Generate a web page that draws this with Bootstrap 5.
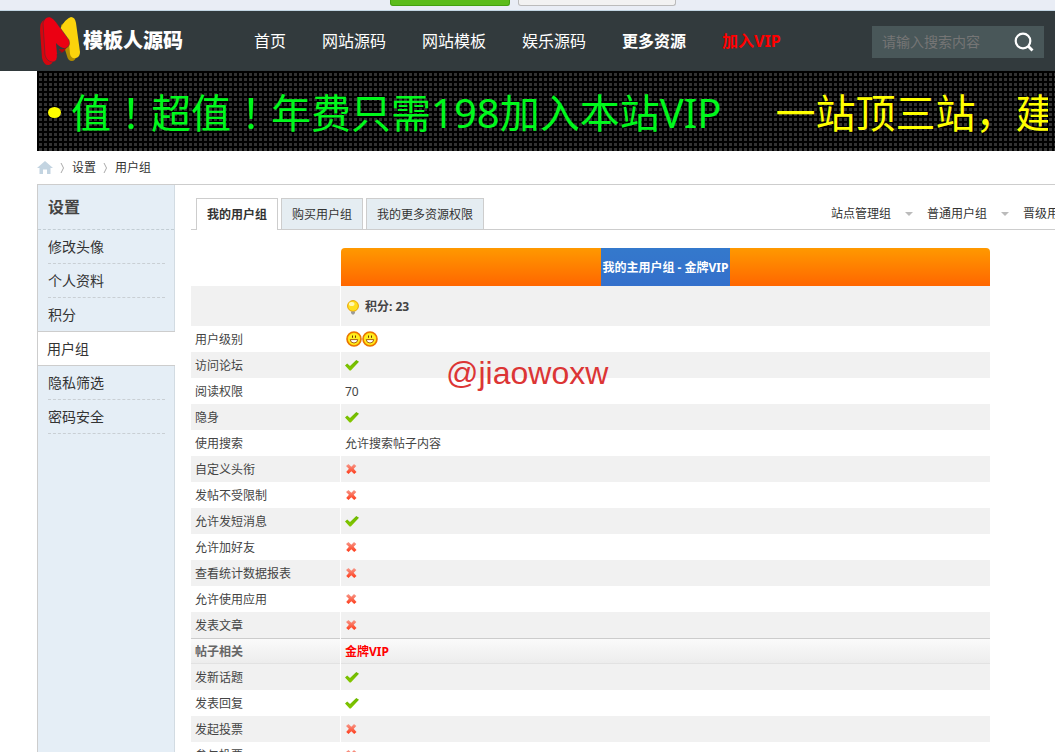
<!DOCTYPE html>
<html lang="zh-CN">
<head>
<meta charset="utf-8">
<meta name="viewport" content="width=device-width, initial-scale=1">
<title>用户组</title>
<link href="https://cdn.jsdelivr.net/npm/bootstrap@5.3.0/dist/css/bootstrap.min.css" rel="stylesheet">
<style>
body{font-family:"Noto Sans","Noto Sans CJK SC",sans-serif;font-size:12px;line-height:18px;color:#444;background:#fff}
a{color:#333;text-decoration:none}
.page-gutter{margin-left:37px}
.topstrip{height:11px;background:#e9edf5;border-bottom:1px solid #c2d5e3;padding-left:390px;gap:8px}
.topstrip button{height:6px;padding:0;border-radius:0 0 3px 3px;border:1px solid #bbb;border-top:0;background:#f2f2f2;width:158px}
.topstrip .go{width:120px;background:#5cbc1b;border-color:#45a010}
.mainnav{height:60px;background:#323a3d;padding:0 11px 0 37px}
.brand{width:217px;color:#fff;font-size:20px;font-weight:900;line-height:30px}
.mainnav nav{gap:36px;font-size:16px;line-height:24px}
.mainnav nav a{color:#fff}
.mainnav nav a.vip{color:#f00}
.searchbox{width:172px;height:32px;background:#495759;padding:0 10px;margin-top:2px}
.searchbox input{background:none;border:0;outline:0;color:#fff;font-size:14px;line-height:20px;padding:0;min-width:0;flex:1}
.searchbox input::placeholder{color:#757575;opacity:1}
.searchbox button{background:none;border:0;padding:0;line-height:0}
.ticker{height:80px;background-color:#323232;background-image:linear-gradient(90deg,#000 0 2px,transparent 2px 5px),linear-gradient(#000 0 2px,transparent 2px 5px);background-size:5px 5px;font-size:40px;line-height:80px;color:#00f81c;padding-left:11px;padding-right:7px}
.ticker .run{height:80px;overflow:hidden;white-space:nowrap}
.ticker .dot{display:inline-block;width:13px;height:11px;border-radius:50%;background:#ff0;margin-right:10px;vertical-align:10px}
.ticker .pt{font-family:"Noto Sans CJK TC",sans-serif}
.ticker .second{color:#ff0;margin-left:54px}
.crumbs{height:33px}
.crumbs svg{margin:0 5px}
.crumbs a svg{margin:0}
.panel{border-top:1px solid #cdcdcd;border-left:1px solid #cdcdcd}
.side{width:137px;flex:none;background:#e5eef6;border-right:1px solid #d2dbe2}
.side h2{font-size:16px;line-height:44px;font-weight:700;margin:0;padding-left:10px;border-bottom:1px dashed #c2cdd4}
.side li{margin:0 9px 0 10px;border-bottom:1px dashed #c9cfd4;font-size:14px;line-height:33px}
.side li.before{border-bottom-color:transparent}
.side li.current{margin:-1px -1px 0 0;padding-left:9px;background:#fff;border-top:1px solid #cdcdcd;border-bottom:1px solid #cdcdcd}
.side li a{display:block}
.content{padding:13px 0 0 16px;min-width:0}
.tabs{border-bottom:1px solid #cdcdcd;padding-left:5px;height:32px;gap:3px}
.tabs .tab{border:1px solid #cdcdcd;border-bottom:0;background:#e5edf2;padding:0 10px;height:31px;line-height:32px;white-space:nowrap}
.tabs .tab.on{background:#fff;font-weight:700;height:32px}
.filters{width:224px;overflow:hidden;white-space:nowrap;line-height:30px}
.filters a{flex:none}
.caret{flex:none;width:0;border:4px solid transparent;border-top-color:#bbb;border-bottom:0;margin:0 14px}
.tblwrap{margin:18px 65px 0 0}
.rights{width:100%;border-collapse:separate;border-spacing:0;table-layout:fixed}
.rights td,.rights th{height:26px;padding:2px 4px 0;line-height:18px;vertical-align:middle;font-weight:400;text-align:left}
.rights td{border-left:1px solid #fff}
.rights .alt>*{background:#f1f1f1}
.rights .c1{width:149px}
.rights thead .title{height:38px;padding:0;text-align:center;color:#fff;font-weight:700}
.bar{background:linear-gradient(#f90,#f60);border-radius:4px 4px 0 0;margin-left:1px;height:38px;overflow:hidden}
.bar span{display:inline-block;line-height:40px;padding:0 1px;background:linear-gradient(#3479cc,#346fcb);white-space:nowrap}
.rights .score>*{height:40px}
.rights .score td{font-weight:700}
.rights .sect>*{background:linear-gradient(#fbfbfb,#ececec);box-shadow:inset 0 1px #ccc,inset 0 -1px #e2e2e2;font-weight:700;color:#666}
.rights .sect td{color:#f00}
.rights svg{display:block}
.rights td>svg,.rights .suns{margin-top:-2px}
.rights .suns{margin-left:1px}
.watermark{left:446px;top:354px;font:32px/38px "Liberation Sans",sans-serif;color:#dc3535;pointer-events:none}
</style>
</head>
<body>
<svg width="0" height="0" class="position-absolute" aria-hidden="true">
<defs>
<linearGradient id="redfill" x2="0" y2="1"><stop stop-color="#f79a8c"/><stop offset="1" stop-color="#ff3a18"/></linearGradient>
<linearGradient id="grn" x2="0" y2="1"><stop stop-color="#6cb800"/><stop offset="1" stop-color="#86c800"/></linearGradient>
<symbol id="yes" viewBox="0 0 14 11"><path d="M0 5.5 2.2 3.4 5 6 11.3 0 14 1.7 5.8 10.6H4.6Z" fill="url(#grn)"/></symbol>
<symbol id="no" viewBox="0 0 11 10"><path d="M0 2 2.5 0 5.3 2.8 8 0 10.3 2 7.7 4.8 10.5 8 8.2 10 5.3 7.2 2.5 10 .2 8 2.9 4.8Z" fill="url(#redfill)"/></symbol>
<symbol id="sun" viewBox="0 0 16 16"><circle cx="8" cy="8" r="7" fill="#ffd000" stroke="#ea7400" stroke-width="1.6"/><circle cx="8" cy="8" r="5.8" fill="#ffee20"/><path d="M6.5 4.5V6.8M9.5 4.5V6.8" stroke="#6b3900"/><path d="M4.2 8.6H11.8Q11.4 12 8 12T4.2 8.6Z" fill="#fff" stroke="#a05000" stroke-width=".9"/></symbol>
</defs>
</svg>
<div class="vh-100 overflow-hidden position-relative">
<div class="topstrip d-flex align-items-start"><button class="go" type="button" aria-label="确定"></button><button type="button" aria-label="取消"></button></div>
<header class="mainnav d-flex align-items-center">
  <a href="#" class="brand d-flex align-items-center flex-shrink-0">
    <svg width="46" height="52" viewBox="0 0 46 52" aria-hidden="true">
      <path d="M24 10 31 5 39 42Q38 46 35 46 31 46 30 41L26 28Z" fill="#b08d00"/>
      <path d="M23 14Q29 3 34 2 38 2 39 8L43 37Q43 42 39 43 34 44 33 39L32 28Z" fill="#fcd30c"/>
      <path d="M18 22 31 31 27 36Q24 40 20 34Z" fill="#b5060c"/>
      <path d="M7 5Q3 7 3 15L5 43Q7 51 12 50 16 49 16 45L9 20Z" fill="#d3060f"/>
      <path d="M6 8Q8 1 13 2 16 3 19 7L32 25Q34 31 29 33L20 39Q21 46 16 47 10 47 8 40Z" fill="#eb0012" stroke="#323a3d" stroke-width=".5"/>
      <path d="M19 28 20 39 29 33Q24 34 19 28Z" fill="#323a3d"/>
      <path d="M22 34Q25 35 29 33 26 39 22 35Z" fill="#b5060c"/>
    </svg><span>模板人源码</span></a>
  <nav class="d-flex flex-shrink-0"><a href="#">首页</a><a href="#">网站源码</a><a href="#">网站模板</a><a href="#">娱乐源码</a><a href="#" class="fw-bold">更多资源</a><a href="#" class="vip fw-bold">加入VIP</a></nav>
  <form class="searchbox d-flex align-items-center ms-auto"><input type="text" placeholder="请输入搜索内容" aria-label="搜索内容"><button type="button" aria-label="搜索"><svg width="20" height="20" viewBox="0 0 20 20" fill="none" stroke="#fff" stroke-width="2.2"><circle cx="9" cy="9" r="7.3"/><path d="M14 14 18.5 18.5" stroke-width="2.8"/></svg></button></form>
</header>
<div class="page-gutter">
  <div class="ticker"><div class="run"><span class="dot"></span>值<span class="pt" lang="zh-TW">！</span>超值<span class="pt" lang="zh-TW">！</span>年费只需198加入本站VIP<span class="second">一站顶三站，建</span></div></div>
  <div class="crumbs d-flex align-items-center">
    <a href="#" aria-label="首页" class="lh-1"><svg width="16" height="13" viewBox="0 0 16 13"><path d="M8 0 16 7H13.5V13H10V8.5H6V13H2.5V7H0Z" fill="#c3d4e1"/></svg></a>
    <svg width="9" height="12" viewBox="0 0 9 12" fill="none" stroke="#aaa"><path d="M3 1 5.5 6 3 11"/></svg>
    <a href="#">设置</a>
    <svg width="9" height="12" viewBox="0 0 9 12" fill="none" stroke="#aaa"><path d="M3 1 5.5 6 3 11"/></svg>
    <a href="#">用户组</a>
  </div>
  <div class="panel d-flex">
    <aside class="side"><h2>设置</h2>
      <ul class="list-unstyled m-0"><li><a href="#">修改头像</a></li><li><a href="#">个人资料</a></li><li class="before"><a href="#">积分</a></li><li class="current"><a href="#">用户组</a></li><li><a href="#">隐私筛选</a></li><li><a href="#">密码安全</a></li></ul>
    </aside>
    <main class="content flex-grow-1">
      <div class="tabs d-flex"><a href="#" class="tab on">我的用户组</a><a href="#" class="tab">购买用户组</a><a href="#" class="tab">我的更多资源权限</a>
        <div class="filters d-flex align-items-center ms-auto"><a href="#">站点管理组</a><span class="caret"></span><a href="#">普通用户组</a><span class="caret"></span><a href="#">晋级用户组</a></div></div>
      <div class="tblwrap"><table class="rights">
        <colgroup><col class="c1"><col></colgroup>
        <thead><tr><th></th><th class="title"><div class="bar"><span>我的主用户组 - 金牌VIP</span></div></th></tr></thead>
        <tbody>
        <tr class="alt score"><th></th><td><div class="d-flex align-items-center gap-1"><svg width="16" height="16" viewBox="0 0 16 16"><circle cx="8" cy="7" r="5.4" fill="#ffdf20" stroke="#e8a400"/><ellipse cx="6.7" cy="5" rx="2.8" ry="2" fill="#fff8b5"/><path d="M6 12.5H10V14L8.8 15.5H7.2L6 14Z" fill="#9a9a9a"/></svg>积分: 23</div></td></tr>
        <tr><th>用户级别</th><td><div class="suns d-flex"><svg width="16" height="16"><use href="#sun"/></svg><svg width="16" height="16"><use href="#sun"/></svg></div></td></tr>
        <tr class="alt"><th>访问论坛</th><td><svg width="14" height="11"><use href="#yes"/></svg></td></tr>
        <tr><th>阅读权限</th><td>70</td></tr>
        <tr class="alt"><th>隐身</th><td><svg width="14" height="11"><use href="#yes"/></svg></td></tr>
        <tr><th>使用搜索</th><td>允许搜索帖子内容</td></tr>
        <tr class="alt"><th>自定义头衔</th><td><svg width="13" height="10"><use href="#no"/></svg></td></tr>
        <tr><th>发帖不受限制</th><td><svg width="13" height="10"><use href="#no"/></svg></td></tr>
        <tr class="alt"><th>允许发短消息</th><td><svg width="14" height="11"><use href="#yes"/></svg></td></tr>
        <tr><th>允许加好友</th><td><svg width="13" height="10"><use href="#no"/></svg></td></tr>
        <tr class="alt"><th>查看统计数据报表</th><td><svg width="13" height="10"><use href="#no"/></svg></td></tr>
        <tr><th>允许使用应用</th><td><svg width="13" height="10"><use href="#no"/></svg></td></tr>
        <tr class="alt"><th>发表文章</th><td><svg width="13" height="10"><use href="#no"/></svg></td></tr>
        <tr class="sect"><th>帖子相关</th><td>金牌VIP</td></tr>
        <tr class="alt"><th>发新话题</th><td><svg width="14" height="11"><use href="#yes"/></svg></td></tr>
        <tr><th>发表回复</th><td><svg width="14" height="11"><use href="#yes"/></svg></td></tr>
        <tr class="alt"><th>发起投票</th><td><svg width="13" height="10"><use href="#no"/></svg></td></tr>
        <tr><th>参与投票</th><td><svg width="13" height="10"><use href="#no"/></svg></td></tr>
        </tbody>
      </table></div>
    </main>
  </div>
</div>
<div class="watermark position-absolute">@jiaowoxw</div>
</div>
<script src="https://cdn.jsdelivr.net/npm/bootstrap@5.3.0/dist/js/bootstrap.bundle.min.js"></script>
</body>
</html>
